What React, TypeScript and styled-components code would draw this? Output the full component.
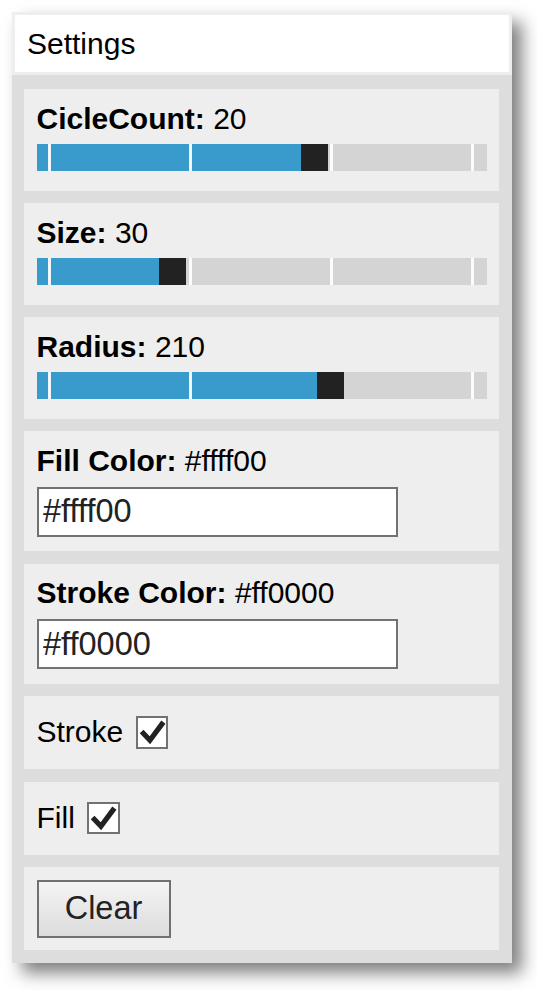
import React from "react";
import styled, { createGlobalStyle } from "styled-components";

const Global = createGlobalStyle`
  html, body { margin: 0; padding: 0; background: #ffffff; }
  body { font-family: "Liberation Sans", Arial, sans-serif; }
`;

const Page = styled.div`
  padding: 12px 0 28px 12px;
  min-height: 990px;
  box-sizing: border-box;
`;

const Panel = styled.div`
  width: 500px;
  background: #dddddd;
  box-shadow: 10px 10px 16px rgba(0, 0, 0, 0.5);
`;

const TitleBar = styled.div`
  border: 3px solid #eeeeee;
  background: #ffffff;
  height: 57px;
  line-height: 57px;
  padding-left: 12px;
  font-size: 30px;
  color: #000;
`;

const Body = styled.div`
  display: flex;
  flex-direction: column;
  gap: 12.5px;
  padding: 14px 13px 12.5px 12px;
`;

const Section = styled.div<{ $pb?: number }>`
  background: #eeeeee;
  padding: 12.5px 12.5px ${(p) => p.$pb ?? 12.5}px;
`;

const Label = styled.div`
  font-size: 30px;
  line-height: 34.5px;
  color: #000;
  white-space: nowrap;
  b {
    font-weight: bold;
  }
`;

const Track = styled.div`
  position: relative;
  display: flex;
  margin-top: 8px;
  height: 27px;
  background: #d4d4d4;
`;

const Fill = styled.div`
  height: 100%;
  background: #389bcb;
`;

const Thumb = styled.div`
  position: relative;
  z-index: 2;
  width: 27px;
  height: 100%;
  background: #222222;
`;

const Tick = styled.div<{ $i: number }>`
  position: absolute;
  z-index: 1;
  top: 0;
  bottom: 0;
  left: ${(p) => 11.5 + p.$i * 141}px;
  width: 2.5px;
  background: rgba(255, 255, 255, 0.92);
`;

const TextField = styled.input`
  display: block;
  box-sizing: border-box;
  width: 361px;
  height: 50px;
  margin: 8.5px 0 0 0;
  border: 2.5px solid #727272;
  padding: 0 4px 0 4.5px;
  background: #ffffff;
  font-family: "Liberation Sans", Arial, sans-serif;
  font-size: 32.5px;
  color: #222222;
  outline: none;
`;

const CheckRow = styled.label`
  display: flex;
  align-items: center;
  height: 48px;
  font-size: 30px;
  line-height: 34.5px;
  color: #000;
`;

const Box = styled.span`
  display: inline-flex;
  box-sizing: border-box;
  margin-left: 12.5px;
  width: 32.5px;
  height: 32.5px;
  border: 2.5px solid #727272;
  background: #ffffff;
  svg {
    display: block;
    width: 100%;
    height: 100%;
  }
`;

const Button = styled.button`
  display: block;
  box-sizing: border-box;
  width: 134px;
  height: 58px;
  padding: 0;
  border: 2.5px solid #707070;
  background: linear-gradient(#f4f4f4, #dcdcdc);
  font-family: "Liberation Sans", Arial, sans-serif;
  font-size: 32.5px;
  color: #222222;
`;

type SliderDef = { name: string; value: number; min: number; max: number };

const sliders: SliderDef[] = [
  { name: "CicleCount", value: 20, min: 0, max: 32 },
  { name: "Size", value: 30, min: 0, max: 104 },
  { name: "Radius", value: 210, min: 0, max: 317 },
];

const colors = [
  { name: "Fill Color", value: "#ffff00" },
  { name: "Stroke Color", value: "#ff0000" },
];

const checks = ["Stroke", "Fill"];

function Slider({ def }: { def: SliderDef }) {
  const frac = (def.value - def.min) / (def.max - def.min);
  const left = frac * (450 - 27);
  return (
    <Section $pb={19.5}>
      <Label>
        <b>{def.name}:</b> {def.value}
      </Label>
      <Track>
        <Fill style={{ width: `${left}px` }} />
        <Thumb />
        {[0, 1, 2, 3].map((i) => (
          <Tick key={i} $i={i} />
        ))}
      </Track>
    </Section>
  );
}

function Check() {
  return (
    <svg viewBox="0 0 27.5 27.5">
      <polyline
        points="3.5,13 11.5,21.5 24.5,4"
        fill="none"
        stroke="#222"
        strokeWidth="5"
      />
    </svg>
  );
}

export default function App() {
  return (
    <Page>
      <Global />
      <Panel>
        <TitleBar>Settings</TitleBar>
        <Body>
          {sliders.map((s) => (
            <Slider key={s.name} def={s} />
          ))}
          {colors.map((c) => (
            <Section key={c.name} $pb={14.5}>
              <Label>
                <b>{c.name}:</b> {c.value}
              </Label>
              <TextField defaultValue={c.value} />
            </Section>
          ))}
          {checks.map((c) => (
            <Section key={c}>
              <CheckRow>
                {c}
                <Box>
                  <Check />
                </Box>
              </CheckRow>
            </Section>
          ))}
          <Section>
            <Button>Clear</Button>
          </Section>
        </Body>
      </Panel>
    </Page>
  );
}
